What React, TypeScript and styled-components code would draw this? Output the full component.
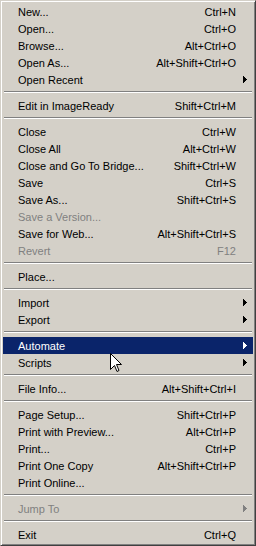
import styled, { createGlobalStyle } from "styled-components";

const GlobalStyle = createGlobalStyle`
  html, body {
    margin: 0;
    padding: 0;
    background: #d4d0c8;
  }
`;

const Menu = styled.div`
  position: relative;
  width: 256px;
  box-sizing: border-box;
  background: #d4d0c8;
  border: 1px solid;
  border-color: #d4d0c8 #404040 #404040 #d4d0c8;
  box-shadow: inset 1px 1px #ffffff, inset -1px -1px #808080;
  padding: 2px;
  font-family: "Liberation Sans", Arial, sans-serif;
  font-size: 11px;
  color: #000;
  cursor: default;
`;

const Item = styled.div<{ $active?: boolean; $disabled?: boolean }>`
  display: grid;
  grid-template-columns: 1fr auto 17px;
  align-items: center;
  height: 17px;
  padding-left: 15px;
  white-space: nowrap;
  background: ${({ $active }) => ($active ? "#0a246a" : "transparent")};
  color: ${({ $active, $disabled }) =>
    $active ? "#ffffff" : $disabled ? "#808080" : "#000000"};
`;

const Label = styled.span`
  line-height: 16px;
  padding-top: 1px;
`;

const Shortcut = styled.span`
  line-height: 16px;
  padding-top: 1px;
  text-align: right;
`;

const ArrowCell = styled.span`
  display: flex;
  align-items: center;
  padding-left: 7px;
  height: 17px;
`;

const Separator = styled.div`
  margin: 3px 1px 4px;
  border-top: 1px solid #808080;
  border-bottom: 1px solid #ffffff;
`;

const Pointer = styled.svg`
  position: absolute;
  left: 109px;
  top: 352px;
`;

type Entry =
  | { sep: true }
  | {
      label: string;
      shortcut?: string;
      sub?: boolean;
      disabled?: boolean;
      active?: boolean;
    };

const entries: Entry[] = [
  { label: "New...", shortcut: "Ctrl+N" },
  { label: "Open...", shortcut: "Ctrl+O" },
  { label: "Browse...", shortcut: "Alt+Ctrl+O" },
  { label: "Open As...", shortcut: "Alt+Shift+Ctrl+O" },
  { label: "Open Recent", sub: true },
  { sep: true },
  { label: "Edit in ImageReady", shortcut: "Shift+Ctrl+M" },
  { sep: true },
  { label: "Close", shortcut: "Ctrl+W" },
  { label: "Close All", shortcut: "Alt+Ctrl+W" },
  { label: "Close and Go To Bridge...", shortcut: "Shift+Ctrl+W" },
  { label: "Save", shortcut: "Ctrl+S" },
  { label: "Save As...", shortcut: "Shift+Ctrl+S" },
  { label: "Save a Version...", disabled: true },
  { label: "Save for Web...", shortcut: "Alt+Shift+Ctrl+S" },
  { label: "Revert", shortcut: "F12", disabled: true },
  { sep: true },
  { label: "Place..." },
  { sep: true },
  { label: "Import", sub: true },
  { label: "Export", sub: true },
  { sep: true },
  { label: "Automate", sub: true, active: true },
  { label: "Scripts", sub: true },
  { sep: true },
  { label: "File Info...", shortcut: "Alt+Shift+Ctrl+I" },
  { sep: true },
  { label: "Page Setup...", shortcut: "Shift+Ctrl+P" },
  { label: "Print with Preview...", shortcut: "Alt+Ctrl+P" },
  { label: "Print...", shortcut: "Ctrl+P" },
  { label: "Print One Copy", shortcut: "Alt+Shift+Ctrl+P" },
  { label: "Print Online..." },
  { sep: true },
  { label: "Jump To", sub: true, disabled: true },
  { sep: true },
  { label: "Exit", shortcut: "Ctrl+Q" },
];

const SubArrow = ({ color }: { color: string }) => (
  <svg width="4" height="7" viewBox="0 0 4 7">
    <path d="M0 0 L4 3.5 L0 7 Z" fill={color} shapeRendering="crispEdges" />
  </svg>
);

export default function App() {
  return (
    <>
      <GlobalStyle />
      <Menu>
        {entries.map((e, i) => {
          if ("sep" in e) return <Separator key={i} />;
          const arrowColor = e.active ? "#ffffff" : e.disabled ? "#808080" : "#000000";
          return (
            <Item key={i} $active={e.active} $disabled={e.disabled}>
              <Label>{e.label}</Label>
              <Shortcut>{e.shortcut}</Shortcut>
              <ArrowCell>{e.sub && <SubArrow color={arrowColor} />}</ArrowCell>
            </Item>
          );
        })}
        <Pointer width="12" height="20" viewBox="0 0 12 20">
          <path
            d="M0.5 0.5 L0.5 16.5 L4.5 12.5 L7 18.5 L9 17.5 L6.5 11.5 L11.5 11.5 Z"
            fill="#ffffff"
            stroke="#000000"
            strokeWidth="1"
            strokeLinejoin="miter"
          />
        </Pointer>
      </Menu>
    </>
  );
}
